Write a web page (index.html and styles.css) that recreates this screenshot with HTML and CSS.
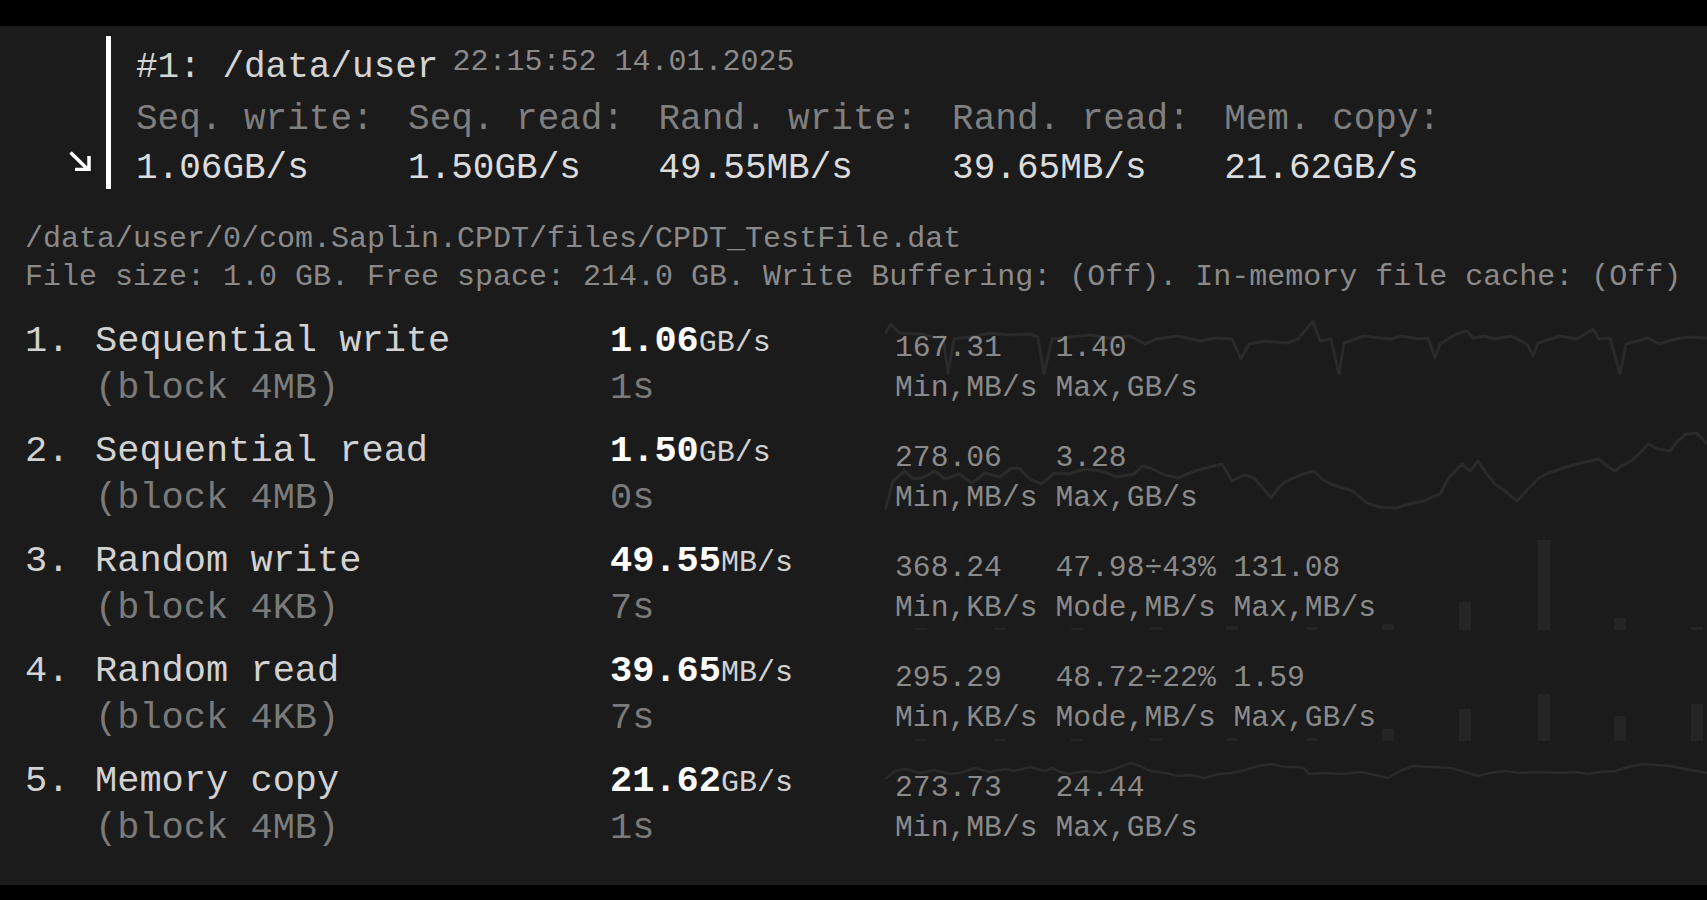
FILE: index.html
```html
<!DOCTYPE html>
<html lang="en">
<head>
<meta charset="utf-8">
<title>CPDT results</title>
<link rel="stylesheet" href="styles.css">
</head>
<body>
<div class="screen">
  <header class="run">
    <div class="arrow">
      <svg width="22" height="20" viewBox="0 0 22 20"><path d="M1.5 1.5 L19 18.5 M6 18.5 H20 V5" fill="none" stroke="#fff" stroke-width="3.5"/></svg>
    </div>
    <div class="run-body">
      <div class="run-title"><span class="title">#1: /data/user</span><span class="stamp">22:15:52 14.01.2025</span></div>
      <div class="summary">
        <div class="sum-col"><div class="sum-label">Seq. write:</div><div class="sum-val">1.06GB/s</div></div>
        <div class="sum-col"><div class="sum-label">Seq. read:</div><div class="sum-val">1.50GB/s</div></div>
        <div class="sum-col"><div class="sum-label">Rand. write:</div><div class="sum-val">49.55MB/s</div></div>
        <div class="sum-col"><div class="sum-label">Rand. read:</div><div class="sum-val">39.65MB/s</div></div>
        <div class="sum-col"><div class="sum-label">Mem. copy:</div><div class="sum-val">21.62GB/s</div></div>
      </div>
    </div>
  </header>

  <section class="info">
    <div class="info-line">/data/user/0/com.Saplin.CPDT/files/CPDT_TestFile.dat</div>
    <div class="info-line">File size: 1.0 GB. Free space: 214.0 GB. Write Buffering: (Off). In-memory file cache: (Off)</div>
  </section>

  <section class="tests">
    <div class="row">
      <svg class="graph" width="822" height="94" viewBox="885 319 822 94"><polyline class="line" points="885,333 891,323 899,332 921,333 937,337 943,335 948,372 954,338 976,335 990,332 1008,334 1030,333 1038,336 1044,373 1052,338 1070,336 1090,334 1110,337 1130,335 1145,343 1156,338 1178,335 1200,340 1216,337 1232,338 1241,358 1249,343 1265,340 1287,342 1298,338 1313,320 1320,340 1331,338 1339,373 1344,342 1364,335 1380,337 1391,338 1402,335 1418,338 1428,337 1435,357 1440,343 1456,333 1467,330 1473,337 1484,335 1495,338 1511,335 1527,343 1533,355 1538,342 1560,335 1577,338 1593,328 1599,338 1610,337 1620,373 1626,343 1648,337 1659,343 1675,338 1690,336 1707,337"/></svg>
      <div class="num">1.</div>
      <div class="name"><div>Sequential write</div><div class="sub">(block 4MB)</div></div>
      <div class="val"><div><span class="big">1.06</span><span class="unit">GB/s</span></div><div class="sub">1s</div></div>
      <div class="stats">
        <div class="st"><div>167.31</div><div>Min,MB/s</div></div>
        <div class="st"><div>1.40</div><div>Max,GB/s</div></div>
      </div>
    </div>

    <div class="row">
      <svg class="graph" width="822" height="94" viewBox="885 429 822 94"><polyline class="line" points="885,510 893,480 905,470 913,478 921,477 935,470 945,478 959,473 972,482 985,472 1000,476 1010,468 1019,467 1030,478 1041,483 1055,472 1069,473 1085,468 1101,470 1118,476 1134,473 1142,465 1150,467 1165,474 1178,477 1195,470 1210,466 1222,463 1232,480 1244,474 1254,477 1262,486 1271,497 1280,485 1287,480 1300,474 1314,470 1322,478 1331,483 1342,487 1353,490 1362,498 1369,503 1380,506 1396,507 1410,503 1424,500 1432,496 1440,493 1448,478 1455,470 1462,463 1470,470 1478,460 1486,472 1495,483 1505,490 1517,500 1528,488 1539,477 1548,472 1555,470 1566,466 1577,463 1590,460 1599,458 1607,465 1615,470 1623,464 1631,460 1640,452 1648,443 1658,448 1670,450 1678,440 1686,433 1697,432 1707,443"/></svg>
      <div class="num">2.</div>
      <div class="name"><div>Sequential read</div><div class="sub">(block 4MB)</div></div>
      <div class="val"><div><span class="big">1.50</span><span class="unit">GB/s</span></div><div class="sub">0s</div></div>
      <div class="stats">
        <div class="st"><div>278.06</div><div>Min,MB/s</div></div>
        <div class="st"><div>3.28</div><div>Max,GB/s</div></div>
      </div>
    </div>

    <div class="row">
      <svg class="graph" width="822" height="94" viewBox="885 539 822 94">
        <line class="mode" x1="962" y1="541" x2="962" y2="629"/>
        <rect class="bar" x="915" y="627" width="12" height="2"/>
        <rect class="bar" x="994" y="627" width="12" height="2"/>
        <rect class="bar" x="1071" y="627" width="12" height="2"/>
        <rect class="bar" x="1150" y="626" width="12" height="3"/>
        <rect class="bar" x="1226" y="625" width="12" height="4"/>
        <rect class="bar" x="1306" y="626" width="12" height="3"/>
        <rect class="bar" x="1382" y="623" width="12" height="6"/>
        <rect class="bar" x="1459" y="601" width="12" height="28"/>
        <rect class="bar" x="1538" y="538" width="12" height="91"/>
        <rect class="bar" x="1614" y="617" width="12" height="12"/>
        <rect class="bar" x="1691" y="626" width="12" height="3"/>
      </svg>
      <div class="num">3.</div>
      <div class="name"><div>Random write</div><div class="sub">(block 4KB)</div></div>
      <div class="val"><div><span class="big">49.55</span><span class="unit">MB/s</span></div><div class="sub">7s</div></div>
      <div class="stats">
        <div class="st"><div>368.24</div><div>Min,KB/s</div></div>
        <div class="st"><div>47.98÷43%</div><div>Mode,MB/s</div></div>
        <div class="st"><div>131.08</div><div>Max,MB/s</div></div>
      </div>
    </div>

    <div class="row">
      <svg class="graph" width="822" height="94" viewBox="885 649 822 94">
        <rect class="bar" x="915" y="738" width="12" height="2"/>
        <rect class="bar" x="994" y="738" width="12" height="2"/>
        <rect class="bar" x="1071" y="738" width="12" height="2"/>
        <rect class="bar" x="1150" y="737" width="12" height="3"/>
        <rect class="bar" x="1226" y="737" width="12" height="3"/>
        <rect class="bar" x="1306" y="737" width="12" height="3"/>
        <rect class="bar" x="1382" y="728" width="12" height="12"/>
        <rect class="bar" x="1459" y="708" width="12" height="32"/>
        <rect class="bar" x="1538" y="693" width="12" height="47"/>
        <rect class="bar" x="1614" y="715" width="12" height="25"/>
        <rect class="bar" x="1691" y="703" width="12" height="37"/>
      </svg>
      <div class="num">4.</div>
      <div class="name"><div>Random read</div><div class="sub">(block 4KB)</div></div>
      <div class="val"><div><span class="big">39.65</span><span class="unit">MB/s</span></div><div class="sub">7s</div></div>
      <div class="stats">
        <div class="st"><div>295.29</div><div>Min,KB/s</div></div>
        <div class="st"><div>48.72÷22%</div><div>Mode,MB/s</div></div>
        <div class="st"><div>1.59</div><div>Max,GB/s</div></div>
      </div>
    </div>

    <div class="row">
      <svg class="graph" width="822" height="94" viewBox="885 759 822 94"><polyline class="line thin" points="885,778 895,770 905,768 920,772 935,769 950,773 959,772 975,767 990,771 1005,768 1014,770 1030,766 1045,770 1052,767 1060,771 1069,773 1085,770 1100,772 1115,768 1125,764 1131,762 1140,765 1150,770 1165,772 1178,775 1190,774 1205,777 1218,773 1232,772 1245,769 1258,765 1271,763 1285,766 1298,766 1304,767 1309,773 1325,772 1342,773 1360,771 1375,774 1388,777 1400,770 1413,765 1430,766 1451,767 1465,771 1478,775 1490,772 1506,770 1520,772 1540,771 1560,772 1575,771 1588,773 1600,771 1615,770 1628,766 1642,763 1656,764 1670,765 1685,768 1697,770 1707,772"/></svg>
      <div class="num">5.</div>
      <div class="name"><div>Memory copy</div><div class="sub">(block 4MB)</div></div>
      <div class="val"><div><span class="big">21.62</span><span class="unit">GB/s</span></div><div class="sub">1s</div></div>
      <div class="stats">
        <div class="st"><div>273.73</div><div>Min,MB/s</div></div>
        <div class="st"><div>24.44</div><div>Max,GB/s</div></div>
      </div>
    </div>
  </section>
</div>
</body>
</html>
```

FILE: styles.css
```css
html, body {
  margin: 0;
  padding: 0;
  background: #000;
}

body {
  font-family: "Liberation Mono", "DejaVu Sans Mono", monospace;
  color: #d2d2d2;
}

.screen {
  margin-top: 26px;
  height: 859px;
  background: #1b1b1b;
  overflow: hidden;
}

/* ---------- run header ---------- */
.run {
  display: flex;
  padding-top: 10px;
}

.arrow {
  width: 106px;
  box-sizing: border-box;
  display: flex;
  justify-content: flex-end;
  align-items: flex-end;
  padding-right: 15px;
  padding-bottom: 18px;
}

.arrow svg {
  display: block;
}

.run-body {
  border-left: 5px solid #fff;
  padding-left: 25px;
  padding-top: 4px;
}

.run-title {
  display: flex;
  align-items: flex-start;
}

.title {
  font-size: 36px;
  line-height: 55px;
  color: #d4d4d4;
}

.stamp {
  font-size: 30px;
  line-height: 34px;
  margin-top: 5px;
  margin-left: 14px;
  color: #8a8a8a;
}

.summary {
  display: flex;
  gap: 34.4px;
  margin-bottom: -4px;
  font-size: 36px;
  line-height: 49px;
}

.sum-label {
  color: #7f7f7f;
}

.sum-val {
  color: #dcdcdc;
}

/* ---------- info ---------- */
.info {
  margin-top: 31px;
  padding-left: 25px;
  font-size: 30px;
  line-height: 38px;
  color: #8a8a8a;
  white-space: nowrap;
}

/* ---------- tests ---------- */
.tests {
  margin-top: 22px;
  padding-left: 25px;
  display: flex;
  flex-direction: column;
  gap: 16px;
}

.row {
  position: relative;
  z-index: 0;
  display: flex;
  height: 94px;
  font-size: 37px;
  line-height: 47px;
  white-space: nowrap;
}

.graph {
  position: absolute;
  left: 860px;
  top: 2px;
  z-index: -1;
  display: block;
}

.line {
  fill: none;
  stroke: #2a2a2a;
  stroke-width: 3;
  stroke-linejoin: round;
}

.line.thin {
  stroke-width: 2.5;
}

.bar {
  fill: #252525;
}

.mode {
  stroke: #222;
  stroke-width: 1;
  stroke-dasharray: 2 3;
}

.num {
  width: 70px;
  color: #d2d2d2;
}

.name {
  width: 515px;
  color: #d2d2d2;
}

.sub {
  color: #7a7a7a;
}

.val {
  width: 285px;
}

.big {
  color: #fff;
  font-weight: bold;
}

.unit {
  font-size: 30px;
  line-height: 30px;
  color: #d2d2d2;
}

.stats {
  display: flex;
  gap: 17.8px;
  padding-top: 9.5px;
  font-size: 29.7px;
  line-height: 40px;
  color: #8a8a8a;
}

.st {
  min-width: 142.6px;
}
```
